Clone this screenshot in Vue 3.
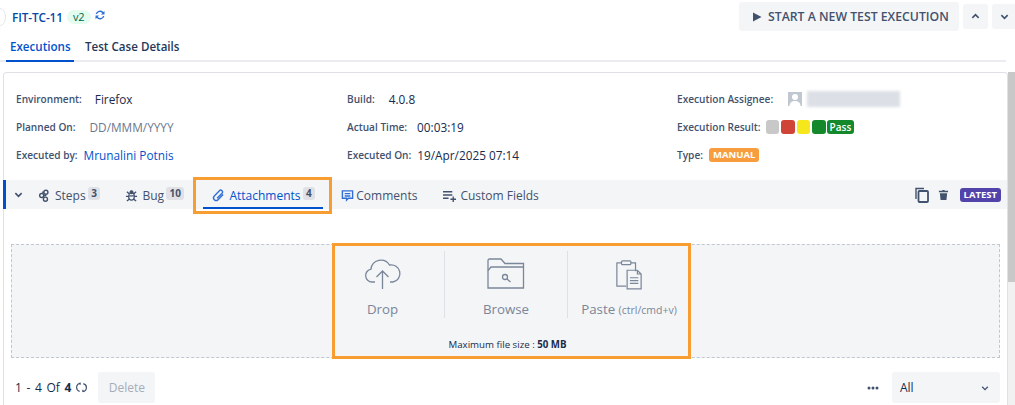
<template>
  <div class="page">
    <header class="top">
      <div class="key-wrap">
        <span class="avatar-stub" />
        <a class="key">FIT-TC-11</a>
        <span class="ver">v2</span>
        <svg class="sync" viewBox="0 0 12 12" width="12" height="12">
          <path d="M1.6 5a4.5 4.5 0 0 1 7.7-2l1.2-1.1v3.6H7l1.3-1.3A3 3 0 0 0 3 5z" fill="#2f6fd6" />
          <path d="M10.4 7a4.5 4.5 0 0 1-7.7 2l-1.2 1.1V6.500H5L3.700 7.800A3 3 0 0 0 9 7z" fill="#2f6fd6" />
        </svg>
      </div>
      <div class="top-actions">
        <button class="start-btn">
          <svg viewBox="0 0 10 10" width="10" height="10"><path d="M1 .5 9.500 5 1 9.500z" fill="#42526e" /></svg>
          START A NEW TEST EXECUTION
        </button>
        <button class="nav-btn">
          <svg viewBox="0 0 10 10" width="9" height="9"><path d="M1.500 6.500 5 3l3.500 3.500" fill="none" stroke="#42526e" stroke-width="1.800" /></svg>
        </button>
        <button class="nav-btn">
          <svg viewBox="0 0 10 10" width="9" height="9"><path d="M1.500 3.500 5 7l3.500-3.500" fill="none" stroke="#42526e" stroke-width="1.800" /></svg>
        </button>
      </div>
    </header>

    <nav class="main-tabs">
      <span class="main-tab on">Executions</span>
      <span class="main-tab">Test Case Details</span>
    </nav>

    <div class="body-row">
      <section class="card">
        <div class="info">
          <div class="col">
            <div class="row"><label>Environment:</label><span class="val firefox">Firefox</span></div>
            <div class="row"><label>Planned On:</label><span class="val muted">DD/MMM/YYYY</span></div>
            <div class="row"><label>Executed by:</label><span class="val link">Mrunalini Potnis</span></div>
          </div>
          <div class="col col2">
            <div class="row"><label>Build:</label><span class="val build">4.0.8</span></div>
            <div class="row"><label>Actual Time:</label><span class="val actual">00:03:19</span></div>
            <div class="row"><label>Executed On:</label><span class="val executed">19/Apr/2025 07:14</span></div>
          </div>
          <div class="col col3">
            <div class="row">
              <label>Execution Assignee:</label>
              <span class="user-pic">
                <svg viewBox="0 0 14 14" width="14" height="14">
                  <circle cx="7" cy="5" r="3" fill="#fff" />
                  <path d="M1.500 14c0-3.500 2.500-5 5.500-5s5.500 1.500 5.500 5z" fill="#fff" />
                </svg>
              </span>
              <span class="blurred" />
            </div>
            <div class="row">
              <label>Execution Result:</label>
              <span class="chips">
                <i v-for="c in resultColors" :key="c" class="chip" :style="{ background: c }" />
                <b class="pass">Pass</b>
              </span>
            </div>
            <div class="row"><label>Type:</label><b class="manual">MANUAL</b></div>
          </div>
        </div>

        <div class="tabbar">
          <svg class="collapse" viewBox="0 0 10 10" width="9" height="9"><path d="M1.500 3.500 5 7l3.500-3.500" fill="none" stroke="#42526e" stroke-width="1.800" /></svg>
          <span class="tab steps">
            <svg viewBox="0 0 14 14" width="13" height="13" fill="none" stroke="#42526e" stroke-width="1.500">
              <circle cx="8.500" cy="3.500" r="2.200" /><circle cx="4" cy="7" r="2.200" /><circle cx="8" cy="11" r="2.200" />
              <path d="M6.500 3.500H4.500M6 7h3M4.500 9H6" />
            </svg>
            Steps <em class="count">3</em>
          </span>
          <span class="tab bug">
            <svg viewBox="0 0 14 14" width="13" height="13" fill="none" stroke="#42526e" stroke-width="1.400">
              <ellipse cx="7" cy="8" rx="3" ry="4" /><circle cx="7" cy="3.500" r="1.500" fill="#42526e" />
              <path d="M1 8h3M10 8h3M2 3l2.500 2M12 3 9.500 5M2 13l2.500-2M12 13l-2.500-2M4.500 7.500h5" />
            </svg>
            Bug <em class="count">10</em>
          </span>
          <span class="tab attach">
            <svg viewBox="0 0 14 14" width="13" height="13" fill="none" stroke="#2f6fd6" stroke-width="1.500">
              <path d="M12 6 6.500 11.500a2.800 2.800 0 0 1-4-4L8 1.900a1.900 1.900 0 0 1 2.800 2.700L5.500 10" />
            </svg>
            Attachments <em class="count">4</em>
          </span>
          <span class="tab comments">
            <svg viewBox="0 0 14 14" width="13" height="13" fill="none" stroke="#2f6fd6" stroke-width="1.500">
              <path d="M1.500 2h11v8H8l-2 2v-2H1.500z" /><path d="M4 5h6M4 7.500h6" />
            </svg>
            Comments
          </span>
          <span class="tab fields">
            <svg viewBox="0 0 16 14" width="15" height="13" fill="none" stroke="#42526e" stroke-width="1.500">
              <path d="M1 3h10M1 6.500h10M1 10h6M9 11h6M12 8v6" />
            </svg>
            Custom Fields
          </span>
          <span class="tab-tools">
            <svg class="copy-ic" viewBox="0 0 14 16" width="14" height="16" fill="none" stroke="#42526e" stroke-width="1.400">
              <path d="M1 12V1.500h8" /><rect x="3.500" y="4" width="9.500" height="11" rx="1" stroke-width="1.800" />
            </svg>
            <svg class="trash-ic" viewBox="0 0 12 12" width="11" height="11" fill="#42526e">
              <path d="M1 2h3.500l.5-1h2l.5 1H11v1.500H1zM2 4.500h8L9.200 12H2.800z" />
            </svg>
            <b class="latest">LATEST</b>
          </span>
        </div>

        <div class="drop-zone">
          <div class="drop-opts">
            <div class="opt">
              <svg viewBox="0 0 38 32" width="38" height="32" fill="none" stroke="#7a869a" stroke-width="1.300">
                <path d="M11 24H8a6.500 6.500 0 0 1-1-12.900A10 10 0 0 1 25.500 7 8.500 8.500 0 0 1 29 24h-3" />
                <path d="M18.500 31V13M12.500 19l6-6 6 6" />
              </svg>
              <span>Drop</span>
            </div>
            <div class="opt">
              <svg viewBox="0 0 38 32" width="38" height="32" fill="none" stroke="#7a869a" stroke-width="1.300">
                <path d="M1 30V2.500A1.500 1.500 0 0 1 2.500 1H14l4 4.500h18.500v24.500z" />
                <path d="M1 12.500 4 9h32.500" />
                <circle cx="18" cy="19" r="2.500" /><path d="m20 21 3.500 3" />
              </svg>
              <span>Browse</span>
            </div>
            <div class="opt">
              <svg viewBox="0 0 30 32" width="28" height="32" fill="none" stroke="#7a869a" stroke-width="1.300">
                <path d="M7 4H2v25h10" stroke-linejoin="round" /><path d="M22 13V4h-5" />
                <rect x="7" y="2" width="10" height="4" rx="1" />
                <path d="M13 12h11l4 4v16H13zM24 12v4h4M16 20h9M16 23h9M16 26h9" />
              </svg>
              <span>Paste <small>(ctrl/cmd+v)</small></span>
            </div>
          </div>
          <p class="max-size">Maximum file size : <b>50 MB</b></p>
        </div>

        <div class="foot">
          <span class="pager">1 - 4 Of <b>4</b></span>
          <svg viewBox="0 0 12 12" width="11" height="11" fill="none" stroke="#42526e" stroke-width="1.300">
            <path d="M4.500 1.500A4.500 4.500 0 0 0 4 10.300M8 1.700a4.500 4.500 0 0 1-.5 8.800M4.500 .5v2.500M7.500 8.500V11" />
          </svg>
          <button class="delete">Delete</button>
          <svg class="dots" viewBox="0 0 12 4" width="12" height="4" fill="#42526e">
            <circle cx="2" cy="2" r="1.500" /><circle cx="6" cy="2" r="1.500" /><circle cx="10" cy="2" r="1.500" />
          </svg>
          <div class="filter">
            All
            <svg viewBox="0 0 10 10" width="8" height="8"><path d="M1.500 3.500 5 7l3.500-3.500" fill="none" stroke="#42526e" stroke-width="1.600" /></svg>
          </div>
        </div>
      </section>
      <div class="scroll"><div class="thumb" /></div>
    </div>

    <div class="mark mark-tab" />
    <div class="mark mark-drop" />
  </div>
</template>

<script setup>
const resultColors = ['#c8c8c8', '#d04437', '#f6e71c', '#14892c']
</script>

<style>
html, body { margin: 0; background: #fff; }
</style>

<style scoped>
.page {
  position: relative; width: 1015px; height: 405px; overflow: hidden;
  font-family: "Open Sans", "Noto Sans", "Liberation Sans", sans-serif;
  font-size: 12px; color: #172b4d; background: #fff;
}
button { font-family: inherit; border: 0; }

.top { display: flex; justify-content: space-between; height: 33px; padding-top: 2px; box-sizing: border-box; }
.key-wrap { display: flex; align-items: center; height: 29px; }
.avatar-stub { width: 12px; height: 18px; margin-left: -6px; border-radius: 50%; border: 1px solid #e4e6ea; box-sizing: border-box; }
.key { margin-left: 6px; font-size: 11.800px; font-weight: 600; color: #0747a6; letter-spacing: -.1px; }
.ver { margin-left: 4px; padding: 0 6px; height: 14px; line-height: 14px; border-radius: 7px; background: #e3fcef; color: #006644; font-size: 11px; }
.sync { margin-left: 3px; margin-top: -4px; }
.top-actions { display: flex; gap: 4px; align-items: flex-start; margin-right: -2px; }
.start-btn {
  display: flex; align-items: center; gap: 6px; width: 220px; height: 29px; padding: 0 0 0 13px;
  background: #f4f5f7; border-radius: 3px; color: #42526e; font-size: 12.250px; font-weight: 600;
  white-space: nowrap;
}
.nav-btn { width: 25px; height: 25px; margin-top: 2px; padding: 0; background: #f4f5f7; border-radius: 3px; display: flex; align-items: center; justify-content: center; }

.main-tabs { display: flex; width: 1006px; height: 29px; border-bottom: 2px solid #ebecf0; box-sizing: border-box; margin-bottom: 10px; padding-left: 6px; }
.main-tab { font-size: 11.600px; font-weight: 600; line-height: 27px; padding: 0 4px; margin-right: 3px; color: #253858; height: 29px; box-sizing: border-box; white-space: nowrap; }
.main-tab.on { color: #0052cc; border-bottom: 2px solid #0052cc; width: 68px; margin-right: 7px; }

.body-row { display: flex; padding-left: 3px; }
.card { width: 1005px; height: 340px; flex: none; border: 1px solid #dfe1e6; border-bottom: 0; border-radius: 4px 4px 0 0; box-sizing: border-box; }
.scroll { width: 7px; height: 333px; background: #f1f1f1; }
.thumb { height: 210px; background: #c8c8c8; }

.info { display: flex; padding: 12px 0 0 12px; height: 107px; box-sizing: border-box; }
.col { width: 331px; flex: none; }
.col2 { width: 330px; }
.col3 { width: 320px; }
.row { display: flex; align-items: center; height: 28px; white-space: nowrap; }
.row label { font-size: 10.100px; font-weight: 600; color: #42526e; margin-right: 6px; }
.val { font-size: 11.800px; }
.firefox { margin-left: 7px; }
.muted { color: #6b778c; margin-left: 8px; }
.link { color: #0052cc; }
.build { margin-left: 8px; }
.actual { margin-left: 4px; }
.executed { margin-left: 0; }
.user-pic { width: 14px; height: 14px; background: #c1c7d0; margin-left: 9px; overflow: hidden; }
.blurred { width: 93px; height: 16px; margin-left: 5px; background: #dcdfe5; filter: blur(1.500px); }
.chips { display: flex; gap: 2px; margin-left: -1px; }
.chip { width: 13.500px; height: 14px; border-radius: 3px; }
.pass { padding: 0 3px; height: 14px; line-height: 14px; background: #14892c; color: #fff; border-radius: 3px; font-size: 10px; font-weight: 600; margin-left: -1px; }
.manual { padding: 0 4px; height: 14px; line-height: 14px; background: #f79d3e; color: #fff; border-radius: 3px; font-size: 9.500px; font-weight: 700; }

.tabbar {
  display: flex; align-items: center; height: 29px; border-left: 3px solid #0052cc;
  background: #f4f5f7; margin-left: -1px; white-space: nowrap; color: #42526e;
}
.collapse { margin-left: 8px; }
.tab { display: flex; align-items: center; gap: 4px; padding-top: 1px; }
.steps { margin-left: 15px; }
.bug { margin-left: 25px; }
.attach { margin-left: 28px; gap: 4px; color: #0052cc; position: relative; }
.attach::after { content: ""; position: absolute; left: -9px; right: -8px; top: 21px; height: 2px; background: #0052cc; }
.comments { margin-left: 26px; gap: 2px; }
.fields { margin-left: 25px; gap: 3px; }
.count { font-style: normal; font-size: 10px; font-weight: 700; background: #dfe1e6; border-radius: 3px; padding: 0 3.500px; line-height: 13px; color: #42526e; margin: -3px 0 0 -2px; }
.tab-tools { margin-left: auto; display: flex; align-items: center; padding-right: 6px; }
.copy-ic { margin-right: 9px; }
.trash-ic { margin-right: 11px; }
.latest { background: #5243aa; color: #fff; font-size: 9.500px; font-weight: 700; padding: 0 4px; line-height: 14px; border-radius: 3px; }

.drop-zone { margin: 35px 7px 0 7px; height: 114px; border: 1px dashed #c1c7d0; background: #f4f5f7; box-sizing: border-box; }
.drop-opts { display: flex; justify-content: center; padding: 6px 0 0 12px; }
.opt { width: 123px; height: 67px; display: flex; flex-direction: column; align-items: center; gap: 10px; border-left: 1px solid #dfe1e6; padding-top: 7px; box-sizing: border-box; color: #7a869a; font-size: 13.300px; white-space: nowrap; }
.opt:first-child { border-left: 0; width: 111px; padding-right: 12px; }
.opt small { font-size: 10.500px; }
.max-size { margin: 20px 0 0; padding-left: 4px; text-align: center; font-size: 9.700px; color: #172b4d; }

.foot { display: flex; align-items: center; height: 31px; margin-top: 14px; padding: 0 7px 0 11px; }
.pager { font-size: 12px; word-spacing: 1.500px; margin-right: 5px; }
.delete { margin-left: 11px; width: 57px; height: 31px; background: #f4f5f7; color: #a5adba; font-size: 12px; border-radius: 3px; }
.dots { margin-left: auto; margin-right: 13px; }
.filter { width: 108px; height: 31px; box-sizing: border-box; background: #f4f5f7; border-radius: 3px; display: flex; align-items: center; justify-content: space-between; padding: 0 11px 0 8px; font-size: 12px; }

.mark { position: absolute; border: 3px solid #f79d32; box-sizing: border-box; pointer-events: none; }
.mark-tab { left: 193px; top: 177px; width: 139px; height: 37px; }
.mark-drop { left: 332px; top: 243px; width: 359px; height: 116px; }
</style>
